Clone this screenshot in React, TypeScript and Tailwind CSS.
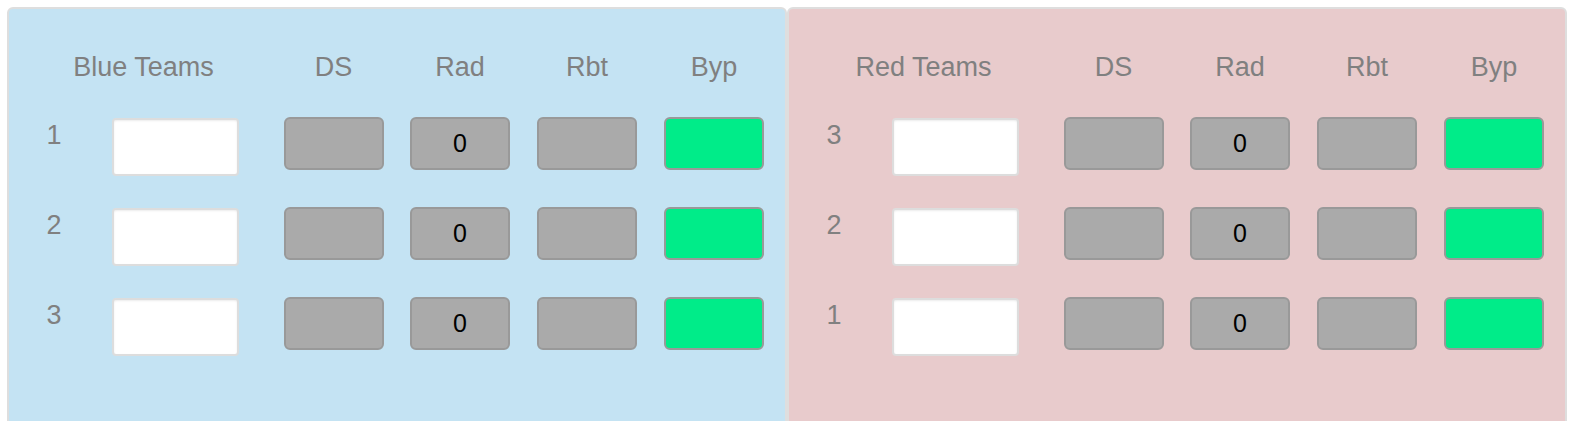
import React from "react";

type Side = "blue" | "red";

const PANELS: { side: Side; title: string; rows: number[] }[] = [
  { side: "blue", title: "Blue Teams", rows: [1, 2, 3] },
  { side: "red", title: "Red Teams", rows: [3, 2, 1] },
];

const COLS = "grid grid-cols-[90px_179px_111px_142px_112px_142px]";

function GrayBox({ children }: { children?: React.ReactNode }) {
  return (
    <div className="mt-[1px] flex h-[53px] w-[100px] items-center justify-center rounded-[6px] border-2 border-[#999999] bg-[#aaaaaa] text-[25px] text-black">
      {children}
    </div>
  );
}

function Panel({ side, title, rows }: { side: Side; title: string; rows: number[] }) {
  return (
    <div
      className={
        side === "blue"
          ? "h-[440px] flex-1 rounded-[6px] border-2 border-[#dedede] bg-[#c4e3f3] pt-[43px]"
          : "h-[440px] flex-1 rounded-[6px] border-2 border-[#dedede] bg-[#e8cbcc] pt-[43px]"
      }
    >
      <div className={`${COLS} text-[27px] leading-[31px] text-[#808080]`}>
        <div className="col-span-2 text-center">{title}</div>
        <div className="text-center">DS</div>
        <div className="text-center">Rad</div>
        <div className="text-center">Rbt</div>
        <div className="text-center">Byp</div>
      </div>

      <div className="mt-[33px] flex flex-col">
        {rows.map((n) => (
          <div key={n} className={`${COLS} h-[90px] items-start`}>
            <div className="pt-[4px] text-center text-[27px] leading-[31px] text-[#808080]">{n}</div>
            <div className="pl-[13px] pt-[2px]">
              <div className="h-[58px] w-[127px] rounded-[4px] border-2 border-[#dddddd] bg-white shadow-[inset_0_1px_2px_rgba(0,0,0,0.08)]" />
            </div>
            <div className="flex justify-center">
              <GrayBox />
            </div>
            <div className="flex justify-center">
              <GrayBox>0</GrayBox>
            </div>
            <div className="flex justify-center">
              <GrayBox />
            </div>
            <div className="flex justify-center">
              <div className="mt-[1px] h-[53px] w-[100px] rounded-[6px] border-2 border-[#999999] bg-[#00ec89]" />
            </div>
          </div>
        ))}
      </div>
    </div>
  );
}

export default function App() {
  return (
    <div className="h-[421px] overflow-hidden bg-white px-[7px] pt-[7px] font-['Liberation_Sans',Arial,sans-serif]">
      <div className="flex">
        {PANELS.map((p) => (
          <Panel key={p.side} {...p} />
        ))}
      </div>
    </div>
  );
}
